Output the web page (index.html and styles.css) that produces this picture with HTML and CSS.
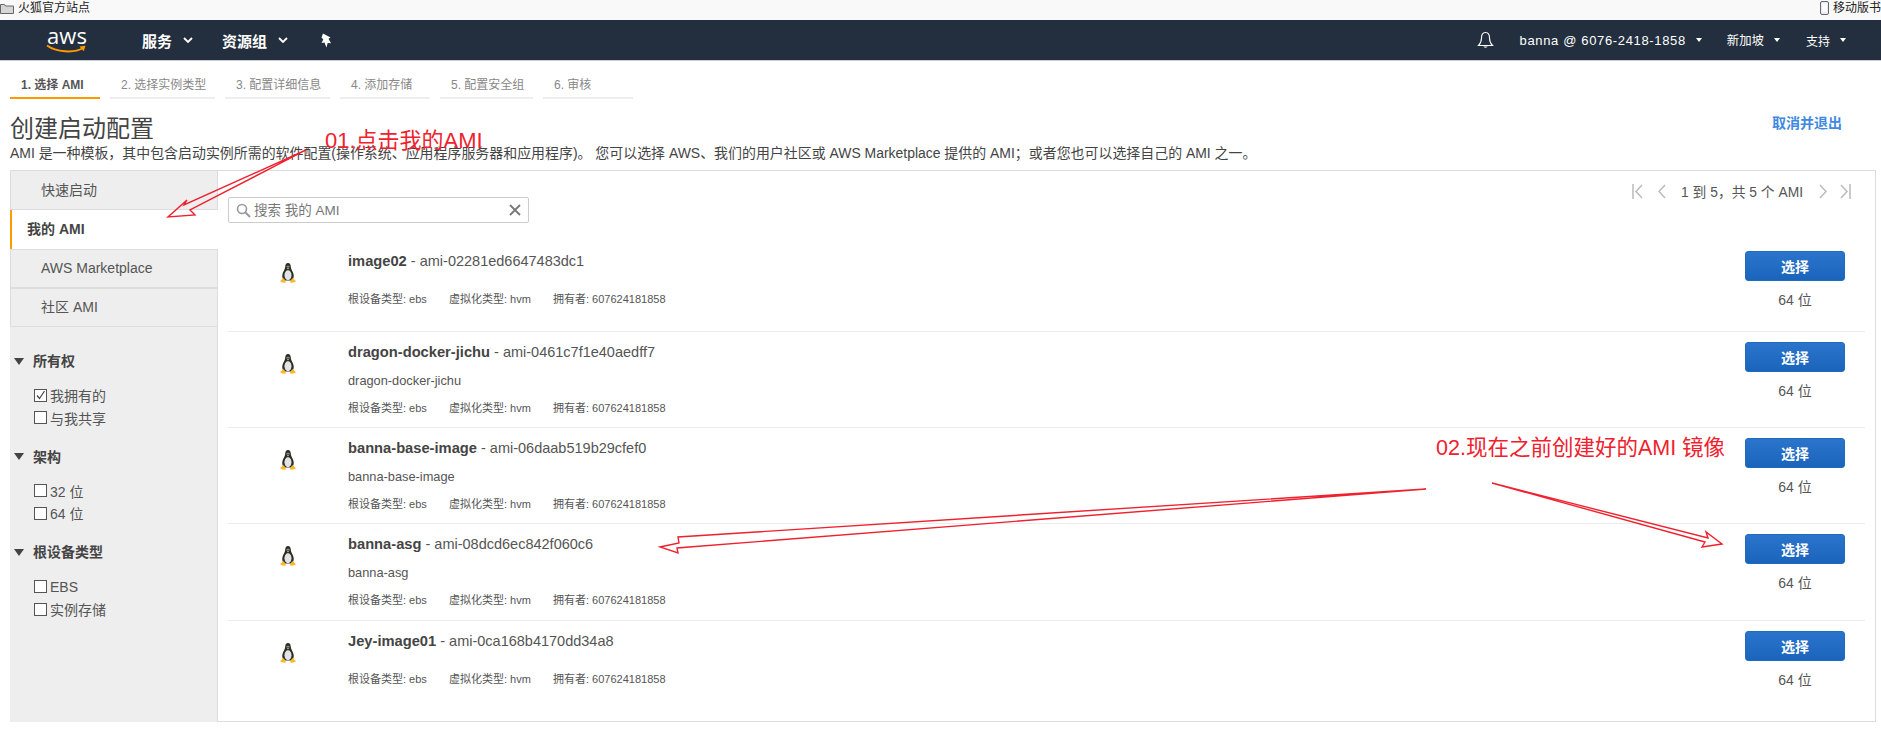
FILE: index.html
```html
<!DOCTYPE html>
<html lang="zh">
<head>
    <meta charset="UTF-8">
    <meta name="viewport" content="width=device-width, initial-scale=1.0">
    <title>创建启动配置</title>
    <link rel="stylesheet" href="styles.css">
</head>
<body>
    <svg class="defs" width="0" height="0">
        <symbol id="tux" viewBox="0 0 16 20">
            <path d="M8 0C5.900 0 5.200 1.800 5.200 4 5.200 6.400 2.600 8.800 2.300 12c-.2 2.400.5 4.400 1.900 5.500h7.600c1.400-1.100 2.100-3.100 1.900-5.500C13.400 8.800 10.800 6.400 10.800 4 10.800 1.800 10.100 0 8 0z" fill="#2c2c2c"/>
            <ellipse cx="8" cy="12.200" rx="3.500" ry="5" fill="#e4e4e4"/>
            <path d="M6.500 2.800h3v1.400h-3z" fill="#8a8a8a"/>
            <path d="M6.600 4.800h2.800L8 6.400z" fill="#e8b23a"/>
            <path d="M3 15c-.8 1.800-2.600 2.200-2.800 3.100C0 19 2.800 20 5.500 19.800c.8-1.300-.8-4-2.500-4.800zM13 15c.8 1.800 2.600 2.200 2.800 3.100.2.900-2.600 1.900-5.300 1.700-.8-1.300.8-4 2.500-4.800z" fill="#fbb829"/>
        </symbol>
        <symbol id="check-caret" viewBox="0 0 10 6">
            <path d="M1 1l4 4 4-4" fill="none" stroke="#fff" stroke-width="1.800"/>
        </symbol>
    </svg>

    <div class="bookmarks">
        <span class="bookmark">
            <svg width="14" height="12" viewBox="0 0 14 12"><path d="M.5 2.500h4l1 1.500h8v7.500H.5z" fill="#d6d6d6" stroke="#666"/></svg>
            火狐官方站点
        </span>
        <span class="bookmark bookmark-mobile">
            <svg width="9" height="14" viewBox="0 0 9 14"><rect x=".5" y=".5" width="8" height="13" rx="1.500" fill="#e8edf2" stroke="#667"/><rect x="2" y="2.500" width="5" height="8" fill="#fff"/></svg>
            移动版书
        </span>
    </div>

    <nav class="topnav">
        <span class="aws-logo">
            <span class="aws-word">aws</span>
            <svg class="aws-smile" width="42" height="10" viewBox="0 0 42 10"><path d="M1 1.500C10 8 28 9.500 37 4" fill="none" stroke="#f90" stroke-width="2"/><path d="M33.500 2.500l6-.8-1.800 5.500z" fill="#f90"/></svg>
        </span>
        <a class="nav-main nav-services">服务 <svg class="caret" width="10" height="6"><use href="#check-caret"/></svg></a>
        <a class="nav-main nav-groups">资源组 <svg class="caret" width="10" height="6"><use href="#check-caret"/></svg></a>
        <svg class="nav-pin" width="13" height="15" viewBox="0 0 13 15"><path d="M3 .5l7.500 4-2 1.300 2.500 4.400-3.300-.3-1.300 4.600-1.900-4.900L1.500 10 3.300 6.500 1.500 4.500z" fill="#fff"/></svg>
        <div class="nav-right">
            <svg class="nav-bell" width="17" height="18" viewBox="0 0 17 18"><path d="M8.500 1.500C5.500 1.500 4.500 4 4.500 7c0 3.500-1 5.500-3 7.500h14c-2-2-3-4-3-7.500 0-3-1-5.500-4-5.500z" fill="none" stroke="#fff" stroke-width="1.100"/><path d="M6.500 15.500h4c0 1.500-4 1.500-4 0z" fill="#fff"/></svg>
            <a class="nav-item nav-user">banna @ 6076-2418-1858<i class="tri"></i></a>
            <a class="nav-item nav-region">新加坡<i class="tri"></i></a>
            <a class="nav-item nav-support">支持<i class="tri"></i></a>
        </div>
    </nav>

    <main class="wizard">
        <ul class="steps">
            <li class="step step-on">1. 选择 AMI</li>
            <li class="step step-wide">2. 选择实例类型</li>
            <li class="step step-wide">3. 配置详细信息</li>
            <li class="step">4. 添加存储</li>
            <li class="step step-mid">5. 配置安全组</li>
            <li class="step">6. 审核</li>
        </ul>

        <div class="page-head">
            <h1>创建启动配置</h1>
            <a class="cancel">取消并退出</a>
        </div>
        <p class="intro">AMI 是一种模板，其中包含启动实例所需的软件配置(操作系统、应用程序服务器和应用程序)。 您可以选择 AWS、我们的用户社区或 AWS Marketplace 提供的 AMI；或者您也可以选择自己的 AMI 之一。</p>

        <div class="panel">
            <aside class="sidebar">
                <a class="side-tab side-tab-top">快速启动</a>
                <a class="side-tab side-tab-on">我的 AMI</a>
                <a class="side-tab">AWS Marketplace</a>
                <a class="side-tab">社区 AMI</a>

                <div class="filters">
                    <div class="filter">
                        <h3><i class="tri-down"></i>所有权</h3>
                        <label><span class="box"><svg width="11" height="11" viewBox="0 0 11 11"><path d="M2 5.500l2.500 3L9.500 1" fill="none" stroke="#444" stroke-width="1.200"/></svg></span>我拥有的</label>
                        <label><span class="box"></span>与我共享</label>
                    </div>
                    <div class="filter">
                        <h3><i class="tri-down"></i>架构</h3>
                        <label><span class="box"></span>32 位</label>
                        <label><span class="box"></span>64 位</label>
                    </div>
                    <div class="filter">
                        <h3><i class="tri-down"></i>根设备类型</h3>
                        <label><span class="box"></span>EBS</label>
                        <label><span class="box"></span>实例存储</label>
                    </div>
                </div>
            </aside>

            <section class="results">
                <div class="results-top">
                    <div class="search">
                        <svg width="15" height="15" viewBox="0 0 15 15"><circle cx="6" cy="6" r="4.500" fill="none" stroke="#999" stroke-width="1.600"/><path d="M9.500 9.500l4.500 4.500" stroke="#999" stroke-width="2"/></svg>
                        <input type="text" placeholder="搜索 我的 AMI">
                        <svg width="12" height="12" viewBox="0 0 12 12"><path d="M1 1l10 10M11 1L1 11" stroke="#777" stroke-width="1.800"/></svg>
                    </div>
                    <div class="pager">
                        <svg width="11" height="15" viewBox="0 0 11 15"><path d="M1 0v15M10 1L4 7.500l6 6.500" fill="none" stroke="#bbb" stroke-width="1.500"/></svg>
                        <svg class="pager-prev" width="8" height="15" viewBox="0 0 8 15"><path d="M7 1L1 7.500 7 14" fill="none" stroke="#bbb" stroke-width="1.500"/></svg>
                        <span class="pager-text">1 到 5，共 5 个 AMI</span>
                        <svg class="pager-next" width="8" height="15" viewBox="0 0 8 15"><path d="M1 1l6 6.500L1 14" fill="none" stroke="#bbb" stroke-width="1.500"/></svg>
                        <svg class="pager-last" width="11" height="15" viewBox="0 0 11 15"><path d="M10 0v15M1 1l6 6.500L1 14" fill="none" stroke="#bbb" stroke-width="1.500"/></svg>
                    </div>
                </div>

                <article class="ami ami-first">
                    <svg class="tux" width="16" height="20"><use href="#tux"/></svg>
                    <div class="ami-body">
                        <div class="ami-title"><b>image02</b> - ami-02281ed6647483dc1</div>
                        <div class="ami-meta"><span>根设备类型: ebs</span><span>虚拟化类型: hvm</span><span>拥有者: 607624181858</span></div>
                    </div>
                    <div class="ami-action"><button>选择</button><div class="bits">64 位</div></div>
                </article>
                <article class="ami">
                    <svg class="tux" width="16" height="20"><use href="#tux"/></svg>
                    <div class="ami-body">
                        <div class="ami-title"><b>dragon-docker-jichu</b> - ami-0461c7f1e40aedff7</div>
                        <div class="ami-desc">dragon-docker-jichu</div>
                        <div class="ami-meta"><span>根设备类型: ebs</span><span>虚拟化类型: hvm</span><span>拥有者: 607624181858</span></div>
                    </div>
                    <div class="ami-action"><button>选择</button><div class="bits">64 位</div></div>
                </article>
                <article class="ami">
                    <svg class="tux" width="16" height="20"><use href="#tux"/></svg>
                    <div class="ami-body">
                        <div class="ami-title"><b>banna-base-image</b> - ami-06daab519b29cfef0</div>
                        <div class="ami-desc">banna-base-image</div>
                        <div class="ami-meta"><span>根设备类型: ebs</span><span>虚拟化类型: hvm</span><span>拥有者: 607624181858</span></div>
                    </div>
                    <div class="ami-action"><button>选择</button><div class="bits">64 位</div></div>
                </article>
                <article class="ami ami-tall">
                    <svg class="tux" width="16" height="20"><use href="#tux"/></svg>
                    <div class="ami-body">
                        <div class="ami-title"><b>banna-asg</b> - ami-08dcd6ec842f060c6</div>
                        <div class="ami-desc">banna-asg</div>
                        <div class="ami-meta"><span>根设备类型: ebs</span><span>虚拟化类型: hvm</span><span>拥有者: 607624181858</span></div>
                    </div>
                    <div class="ami-action"><button>选择</button><div class="bits">64 位</div></div>
                </article>
                <article class="ami ami-last">
                    <svg class="tux" width="16" height="20"><use href="#tux"/></svg>
                    <div class="ami-body">
                        <div class="ami-title"><b>Jey-image01</b> - ami-0ca168b4170dd34a8</div>
                        <div class="ami-meta"><span>根设备类型: ebs</span><span>虚拟化类型: hvm</span><span>拥有者: 607624181858</span></div>
                    </div>
                    <div class="ami-action"><button>选择</button><div class="bits">64 位</div></div>
                </article>
            </section>
        </div>
    </main>

    <!-- red notes drawn over the screenshot -->
    <svg class="arrows" width="1881" height="729" viewBox="0 0 1881 729">
        <path d="M306 150L184 205 187 200 168 217 195 215 190 210z" />
        <path d="M1426 489L678 537 679 543 660 547 678 553 677 548z" />
        <path d="M1492 483L1708 538 1706 532 1722 544 1702 547 1705 542z" />
    </svg>
    <div class="note note-one">01.点击我的AMI</div>
    <div class="note note-two">02.现在之前创建好的AMI 镜像</div>
</body>
</html>
```

FILE: styles.css
```css
* {
    box-sizing: border-box;
}

body {
    margin: 0;
    height: 729px;
    overflow: hidden;
    background-color: #ffffff;
    color: #444;
    font-family: "Liberation Sans", "Noto Sans CJK SC", sans-serif;
    font-size: 13px;
}

.defs {
    position: absolute;
}

/* browser bookmarks strip */
.bookmarks {
    display: flex;
    justify-content: space-between;
    height: 20px;
    background-color: #f9f9f9;
    color: #222;
    font-size: 12px;
    line-height: 16px;
    overflow: hidden;
}

.bookmark {
    display: flex;
    align-items: center;
    gap: 4px;
    height: 16px;
    white-space: nowrap;
}

.bookmark svg {
    flex: none;
}

/* top nav */
.topnav {
    display: flex;
    align-items: center;
    height: 41px;
    background-color: #232f3e;
    border-bottom: 1px solid #c8ccd0;
    color: #fff;
}

.aws-logo {
    display: flex;
    flex-direction: column;
    align-items: center;
    width: 42px;
    height: 30px;
    margin-left: 46px;
    line-height: 22px;
}

.aws-word {
    font-family: "Open Sans", sans-serif;
    font-size: 22px;
    line-height: 20px;
}

.aws-smile {
    margin-top: -1px;
}

.nav-main {
    display: flex;
    align-items: center;
    font-size: 15px;
    font-weight: bold;
    white-space: nowrap;
}

.nav-main .caret {
    margin-left: 11px;
}

.nav-services {
    margin-left: 54px;
}

.nav-groups {
    margin-left: 29px;
}

.nav-pin {
    margin-left: 32px;
}

.nav-right {
    display: flex;
    align-items: center;
    margin-left: auto;
    padding-right: 35px;
}

.nav-bell {
    margin-right: 26px;
}

.nav-item {
    display: flex;
    align-items: center;
    font-size: 13px;
    white-space: nowrap;
}

.nav-user {
    letter-spacing: 0.65px;
}

.nav-region {
    margin-left: 25px;
    font-size: 12.400px;
}

.nav-support {
    margin-left: 26px;
    font-size: 12px;
}

.tri {
    width: 0;
    height: 0;
    margin-left: 10px;
    border-top: 4px solid #fff;
    border-left: 3.5px solid transparent;
    border-right: 3.5px solid transparent;
}

/* wizard */
.wizard {
    padding: 0 5px 0 10px;
}

.steps {
    display: flex;
    gap: 10px;
    margin: 0;
    padding: 11px 0 0;
    list-style: none;
}

.step {
    width: 90px;
    height: 27px;
    padding-left: 11px;
    border-bottom: 2px solid #eee;
    color: #888;
    font-size: 12px;
    line-height: 26px;
    white-space: nowrap;
}

.step-wide {
    width: 105px;
}

.step-mid {
    width: 93px;
}

.step-on {
    border-bottom-color: #f90;
    color: #555;
    font-weight: bold;
}

.page-head {
    display: flex;
    justify-content: space-between;
    align-items: flex-start;
    margin-top: 16px;
    padding-right: 34px;
}

h1 {
    margin: 0;
    color: #444;
    font-size: 24px;
    font-weight: 400;
    line-height: 28px;
}

.cancel {
    margin-top: -1px;
    color: #3f8ae0;
    font-size: 14px;
    font-weight: bold;
    line-height: 18px;
}

.intro {
    margin: 0;
    height: 27px;
    padding-top: 1px;
    font-size: 13.950px;
    line-height: 18px;
    white-space: nowrap;
}

.panel {
    display: flex;
    height: 552px;
    border: 1px solid #ddd;
    border-left: 0;
}

/* left column */
.sidebar {
    flex: none;
    width: 208px;
    background-color: #eee;
    border-right: 1px solid #ddd;
    margin-top: -1px;
    margin-bottom: -1px;
}

.side-tab {
    display: block;
    height: 39px;
    padding-left: 30px;
    border: 1px solid #ddd;
    border-width: 1px 0 1px 1px;
    margin-bottom: 0;
    color: #555;
    font-size: 14px;
    line-height: 37px;
}

.side-tab-top {
    height: 40px;
    line-height: 38px;
}

.side-tab-on {
    position: relative;
    width: 208px;
    padding-left: 15px;
    background-color: #fff;
    border: 0;
    border-left: 2px solid #f90;
    color: #444;
    font-weight: bold;
    line-height: 39px;
}

.filters {
    padding: 24px 0 0 4px;
}

.filter {
    height: 95.700px;
}

.filter h3 {
    display: flex;
    align-items: center;
    margin: 0 0 13px;
    color: #444;
    font-size: 14px;
    line-height: 20px;
}

.tri-down {
    width: 0;
    height: 0;
    margin-right: 9px;
    border-top: 7px solid #444;
    border-left: 5px solid transparent;
    border-right: 5px solid transparent;
}

.filter label {
    display: flex;
    align-items: center;
    height: 22.500px;
    padding-left: 20px;
    color: #555;
    font-size: 14px;
}

.box {
    display: flex;
    align-items: center;
    justify-content: center;
    width: 13px;
    height: 13px;
    margin-right: 3px;
    border: 1px solid #555;
    background-color: #fff;
}

/* right column */
.results {
    flex: 1;
    min-width: 0;
}

.results-top {
    display: flex;
    justify-content: space-between;
    height: 70px;
    padding: 26px 24px 0 10px;
}

.search {
    display: flex;
    align-items: center;
    width: 301px;
    height: 26px;
    padding: 0 7px;
    border: 1px solid #ccc;
    border-radius: 2px;
}

.search input {
    flex: 1;
    min-width: 0;
    margin-left: 3px;
    padding: 0;
    border: 0;
    outline: none;
    font: inherit;
    font-size: 13.500px;
}

.search input::placeholder {
    color: #777;
}

.pager {
    display: flex;
    align-items: center;
    height: 20px;
    margin-top: -16px;
    color: #555;
}

.pager-prev {
    margin-left: 15px;
}

.pager-text {
    margin: 0 16px 0 15px;
    font-size: 13.800px;
    white-space: nowrap;
}

.pager-last {
    margin-left: 13px;
}

.ami {
    display: flex;
    height: 96px;
    margin: 0 10px 0 10px;
    padding: 10px 20px 0 0;
    border-bottom: 1px solid #eaeded;
}

.ami-first {
    height: 91px;
}

.ami-tall {
    height: 97px;
}

.ami-last {
    border-bottom: 0;
}

.tux {
    flex: none;
    margin: 12px 52px 0 52px;
}

.ami-body {
    flex: 1;
}

.ami-title {
    color: #555;
    font-size: 14.500px;
    line-height: 20px;
}

.ami-title b {
    color: #444;
    font-size: 14.700px;
}

.ami-desc {
    margin-top: 9px;
    color: #555;
    font-size: 12.800px;
    line-height: 20px;
}

.ami-meta {
    display: flex;
    margin-top: 20px;
    color: #555;
    font-size: 11px;
    line-height: 16px;
}

.ami-desc + .ami-meta {
    margin-top: 9px;
}

.ami-meta span:nth-child(1) {
    width: 101px;
}

.ami-meta span:nth-child(2) {
    width: 104px;
}

.ami-action {
    flex: none;
    width: 100px;
    text-align: center;
}

button {
    display: block;
    width: 100px;
    height: 30px;
    background: linear-gradient(#2b74cc, #1a65bb);
    border: 1px solid #1d6cc0;
    border-radius: 3px;
    color: #fff;
    font: bold 14px "Liberation Sans", "Noto Sans CJK SC", sans-serif;
}

.bits {
    margin-top: 9px;
    color: #555;
    font-size: 14px;
    line-height: 20px;
}

/* annotations */
.arrows {
    position: absolute;
    top: 0;
    left: 0;
    pointer-events: none;
}

.arrows path {
    fill: none;
    stroke: #f0212e;
    stroke-width: 1.400;
}

.note {
    position: absolute;
    color: #f0212e;
    font-size: 22px;
    line-height: 26px;
    white-space: nowrap;
}

.note-one {
    top: 128px;
    left: 325px;
}

.note-two {
    top: 435px;
    left: 1436px;
    font-size: 21.500px;
}
```
